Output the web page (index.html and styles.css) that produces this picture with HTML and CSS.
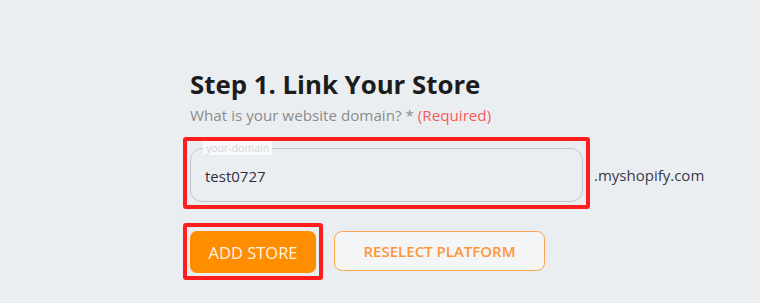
FILE: index.html
```html
<!DOCTYPE html>
<html>
<head>
<meta charset="utf-8">
<link rel="stylesheet" href="styles.css">
</head>
<body>
<div class="panel">
  <h1 class="title">Step 1. Link Your Store</h1>
  <p class="subtitle">What is your website domain? * <span class="required">(Required)</span></p>
  <div class="domain-row">
    <div class="frame frame-input">
      <div class="field">
        <span class="field-label">your-domain</span>
        <span class="field-value">test0727</span>
      </div>
    </div>
    <span class="suffix">.myshopify.com</span>
  </div>
  <div class="actions">
    <div class="frame frame-btn">
      <button class="btn btn-primary">ADD STORE</button>
    </div>
    <button class="btn btn-outline">RESELECT PLATFORM</button>
  </div>
</div>
</body>
</html>
```
FILE: styles.css
```css
html, body {
  margin: 0;
  padding: 0;
  background: #ebeef1;
  font-family: "Open Sans", "Noto Sans", sans-serif;
}
.panel {
  margin-left: 190px;
  padding-top: 67px;
  width: 540px;
}
.title {
  margin: 0;
  font-size: 25.8px;
  line-height: 34px;
  font-weight: 700;
  color: #1c1c1c;
}
.subtitle {
  margin: 4px 0 0;
  font-size: 15.2px;
  line-height: 20px;
  color: #8c8c8c;
}
.required {
  color: #f5595a;
}
.domain-row {
  display: flex;
  align-items: center;
  margin-top: 12px;
  margin-left: -7px;
}
.frame {
  border: 4px solid #ff1d1d;
  border-radius: 3px;
}
.frame-input {
  width: 393px;
  padding: 7px 3px 3px 3px;
}
.field {
  position: relative;
  height: 52px;
  border: 1px solid #c6c6c6;
  border-radius: 12px;
  display: flex;
  align-items: center;
  padding-left: 14px;
}
.field-label {
  position: absolute;
  top: -8px;
  left: 12px;
  padding: 0 3px;
  font-size: 10.5px;
  line-height: 14px;
  color: #d4d6d8;
  background: #f8f9fa;
}
.field-value {
  font-size: 15px;
  color: #2e2e3a;
  margin-top: 2px;
}
.suffix {
  margin-left: 4px;
  margin-top: 4px;
  font-size: 15px;
  color: #3a3a48;
}
.actions {
  display: flex;
  align-items: center;
  margin-top: 14px;
  margin-left: -7px;
}
.frame-btn {
  padding: 4px 3px 3px 3px;
}
.btn {
  font-family: "Open Sans", "Noto Sans", sans-serif;
  font-size: 15px;
  font-weight: 600;
  border-radius: 7px;
  cursor: pointer;
}
.btn-primary {
  display: block;
  width: 126px;
  height: 42px;
  border: none;
  background: #ff8d00;
  color: #fff3e3;
  font-size: 16.5px;
  font-weight: 500;
}
.btn-outline {
  margin-left: 11px;
  width: 211px;
  height: 40px;
  margin-top: -1px;
  border: 1px solid #ffa54f;
  background: #f3f5f7;
  color: #ff9539;
  border-radius: 8px;
}
```
